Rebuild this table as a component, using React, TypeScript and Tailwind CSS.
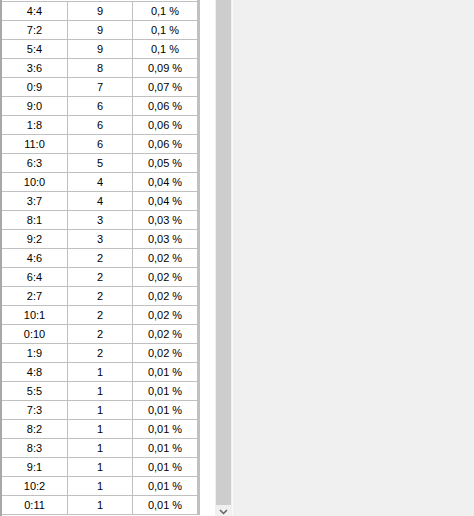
import React from 'react'

const rows: [string, string, string][] = [
  ['4:4', '9', '0,1 %'],
  ['7:2', '9', '0,1 %'],
  ['5:4', '9', '0,1 %'],
  ['3:6', '8', '0,09 %'],
  ['0:9', '7', '0,07 %'],
  ['9:0', '6', '0,06 %'],
  ['1:8', '6', '0,06 %'],
  ['11:0', '6', '0,06 %'],
  ['6:3', '5', '0,05 %'],
  ['10:0', '4', '0,04 %'],
  ['3:7', '4', '0,04 %'],
  ['8:1', '3', '0,03 %'],
  ['9:2', '3', '0,03 %'],
  ['4:6', '2', '0,02 %'],
  ['6:4', '2', '0,02 %'],
  ['2:7', '2', '0,02 %'],
  ['10:1', '2', '0,02 %'],
  ['0:10', '2', '0,02 %'],
  ['1:9', '2', '0,02 %'],
  ['4:8', '1', '0,01 %'],
  ['5:5', '1', '0,01 %'],
  ['7:3', '1', '0,01 %'],
  ['8:2', '1', '0,01 %'],
  ['8:3', '1', '0,01 %'],
  ['9:1', '1', '0,01 %'],
  ['10:2', '1', '0,01 %'],
  ['0:11', '1', '0,01 %'],
]

export default function App() {
  return (
    <div className="flex h-[516px] w-[474px] overflow-hidden bg-[#f0f0f0] font-['Liberation_Sans',Arial,sans-serif] text-[11px] text-black">
      {/* grid */}
      <div className="flex w-[215px] shrink-0 bg-white">
        <div className="flex w-[200px] border-l-2 border-[#a8a8a8]">
          <div className="w-[195px] pt-[1px]">
            <div className="border-t border-[#c0c0c0]">
              {rows.map(([score, count, pct]) => (
                <div key={score} className="grid h-[19px] grid-cols-[66px_65px_64px] border-b border-[#c0c0c0]">
                  <div className="flex items-center justify-center border-r border-[#c0c0c0] pt-[1px]">{score}</div>
                  <div className="flex items-center justify-center border-r border-[#c0c0c0] pt-[1px]">{count}</div>
                  <div className="flex items-center justify-center pt-[1px]">{pct}</div>
                </div>
              ))}
            </div>
          </div>
          <div className="h-[515px] w-[3px] bg-[#c0c0c0]" />
        </div>
      </div>

      {/* vertical scrollbar */}
      <div className="flex w-[17px] shrink-0 flex-col bg-[#f0f0f0]">
        <div className="mx-[1px] h-[505px] bg-[#cdcdcd]" />
        <div className="flex flex-1 items-end justify-center">
          <svg width="9" height="6" viewBox="0 0 9 6" className="mb-[1px]">
            <path d="M1 1 L4.5 4.5 L8 1" fill="none" stroke="#606060" strokeWidth="1.5" />
          </svg>
        </div>
      </div>

      <div className="w-[1px] shrink-0 bg-[#fafafa]" />
      <div className="flex-1 bg-[#f0f0f0]" />
    </div>
  )
}
